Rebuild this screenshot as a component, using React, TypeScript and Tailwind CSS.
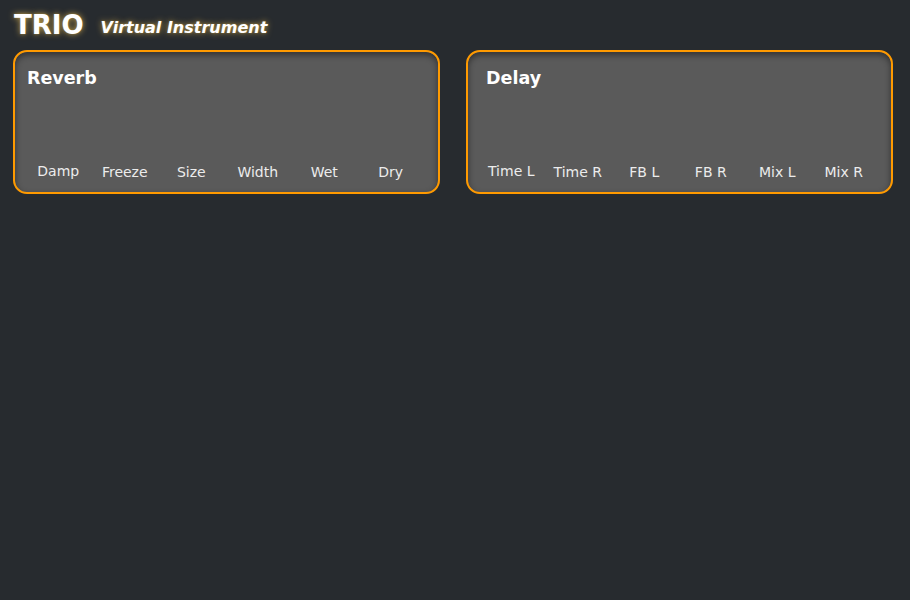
import React from 'react';

const FONT = { fontFamily: '"DejaVu Sans", Verdana, sans-serif' };

function Panel({ title, labels, titlePad }: { title: string; labels: string[]; titlePad: string }) {
  return (
    <section className="w-[427px] h-[144px] rounded-[14px] border-2 border-[#ff9a00] bg-[#5a5a5a] shadow-[inset_0_3px_6px_rgba(0,0,0,0.45)] flex flex-col">
      <h2 className={`text-[17.5px] font-bold text-white pt-[16px] leading-5 ${titlePad}`}>{title}</h2>
      <div className="mt-auto mb-[12px] pl-[10px] pr-[14px] grid grid-cols-6">
        {labels.map((l, i) => (
          <span
            key={l}
            className={`text-center text-[14px] leading-4 text-[#ececec] ${i === 0 ? '-translate-y-px' : ''}`}
          >
            {l}
          </span>
        ))}
      </div>
    </section>
  );
}

export default function App() {
  return (
    <div className="min-h-[600px] w-full bg-[#272b2f]" style={FONT}>
      <header className="flex items-baseline pl-[14px] pt-[9px] h-[50px]">
        <h1 className="text-[26px] font-bold text-white leading-8 [text-shadow:0_0_6px_#c4a24c,0_0_2px_#7a6530]">TRIO</h1>
        <span className="ml-[17px] -translate-y-px text-[16px] font-bold italic text-white [text-shadow:0_0_6px_#c4a24c,0_0_2px_#7a6530]">
          Virtual Instrument
        </span>
      </header>
      <main className="flex gap-[26px] pl-[13px]">
        <Panel title="Reverb" titlePad="pl-[12px]" labels={['Damp', 'Freeze', 'Size', 'Width', 'Wet', 'Dry']} />
        <Panel title="Delay" titlePad="pl-[18px]" labels={['Time L', 'Time R', 'FB L', 'FB R', 'Mix L', 'Mix R']} />
      </main>
    </div>
  );
}
